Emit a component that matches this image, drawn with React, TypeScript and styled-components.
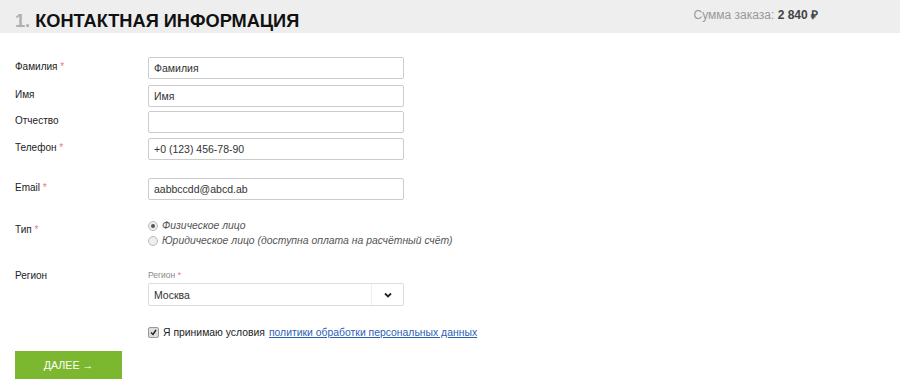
import styled, { createGlobalStyle } from "styled-components";

const GlobalStyle = createGlobalStyle`
  body {
    margin: 0;
    background: #fff;
    font-family: "Liberation Sans", Arial, sans-serif;
    color: #333;
  }
`;

const Header = styled.header`
  height: 33px;
  background: #eeeeee;
  display: flex;
  justify-content: space-between;
  align-items: flex-start;
  padding: 0 82px 0 15px;
`;
const Title = styled.h1`
  margin: 0;
  padding-top: 10px;
  font-size: 18.2px;
  line-height: 22px;
  font-weight: bold;
  color: #111;
  span {
    color: #b0b0b0;
  }
`;
const Total = styled.div`
  padding-top: 7px;
  font-size: 12px;
  line-height: 16px;
  color: #999;
  b {
    color: #444;
  }
`;

const Form = styled.form`
  padding: 24px 15px 0;
`;
const Row = styled.div<{ $gap: number }>`
  display: grid;
  grid-template-columns: 133px 256px;
  margin-bottom: ${(p) => p.$gap}px;
`;
const Label = styled.label`
  font-size: 10px;
  line-height: 12px;
  padding-top: 4px;
  color: #222;
  i {
    color: #e77;
    font-style: normal;
  }
`;
const Input = styled.input`
  box-sizing: border-box;
  width: 256px;
  height: 22px;
  border: 1px solid #ccc;
  border-radius: 2px;
  padding: 0 5px;
  font-family: inherit;
  font-size: 10.5px;
  color: #333;
  outline: none;
`;
const Radios = styled.div`
  display: flex;
  flex-direction: column;
  gap: 4px;
  grid-column: 2 / 4;
`;
const RadioLine = styled.label`
  display: flex;
  align-items: center;
  gap: 4px;
  font-size: 10.4px;
  font-style: italic;
  color: #555;
  white-space: nowrap;
`;
const Dot = styled.span<{ $on?: boolean }>`
  width: 8px;
  height: 8px;
  border-radius: 50%;
  border: 1px solid #bbb;
  background: #eee;
  display: inline-flex;
  align-items: center;
  justify-content: center;
  &::after {
    content: "";
    width: 4px;
    height: 4px;
    border-radius: 50%;
    background: ${(p) => (p.$on ? "#555" : "transparent")};
  }
`;
const Field = styled.div`
  display: flex;
  flex-direction: column;
  gap: 3px;
`;
const Small = styled.span`
  font-size: 8.5px;
  line-height: 10px;
  color: #888;
  padding-top: 4px;
  i {
    color: #e77;
    font-style: normal;
  }
`;
const Select = styled.div`
  box-sizing: border-box;
  width: 256px;
  height: 23px;
  border: 1px solid #ddd;
  border-radius: 2px;
  display: flex;
  align-items: center;
  font-size: 10.5px;
  color: #333;
  span {
    flex: 1;
    padding-left: 5px;
  }
`;
const Caret = styled.div`
  width: 31px;
  height: 100%;
  border-left: 1px solid #eee;
  display: flex;
  align-items: center;
  justify-content: center;
`;
const Agree = styled.div`
  margin-left: 133px;
  display: flex;
  align-items: center;
  gap: 4px;
  font-size: 10.4px;
  color: #222;
  white-space: nowrap;
  margin-bottom: 13px;
  a {
    color: #2b5fb4;
    text-decoration: underline;
  }
`;
const Check = styled.span`
  width: 9px;
  height: 9px;
  border: 1px solid #999;
  border-radius: 2px;
  background: #ddd;
  display: inline-flex;
  align-items: center;
  justify-content: center;
`;
const Button = styled.button`
  width: 107px;
  height: 28px;
  border: none;
  background: #7cb82f;
  color: #fff;
  font-family: inherit;
  font-size: 10.7px;
  cursor: pointer;
`;

export default function App() {
  return (
    <>
      <GlobalStyle />
      <Header>
        <Title>
          <span>1.</span> КОНТАКТНАЯ ИНФОРМАЦИЯ
        </Title>
        <Total>
          Сумма заказа: <b>2 840 ₽</b>
        </Total>
      </Header>
      <Form>
        <Row $gap={6}>
          <Label>
            Фамилия <i>*</i>
          </Label>
          <Input defaultValue="Фамилия" />
        </Row>
        <Row $gap={4}>
          <Label>Имя</Label>
          <Input defaultValue="Имя" />
        </Row>
        <Row $gap={5}>
          <Label>Отчество</Label>
          <Input defaultValue="" />
        </Row>
        <Row $gap={18}>
          <Label>
            Телефон <i>*</i>
          </Label>
          <Input defaultValue="+0 (123) 456-78-90" />
        </Row>
        <Row $gap={20}>
          <Label>
            Email <i>*</i>
          </Label>
          <Input defaultValue="aabbccdd@abcd.ab" />
        </Row>
        <Row $gap={20}>
          <Label>
            Тип <i>*</i>
          </Label>
          <Radios>
            <RadioLine>
              <Dot $on /> Физическое лицо
            </RadioLine>
            <RadioLine>
              <Dot /> Юридическое лицо (доступна оплата на расчётный счёт)
            </RadioLine>
          </Radios>
        </Row>
        <Row $gap={21}>
          <Label>Регион</Label>
          <Field>
            <Small>
              Регион <i>*</i>
            </Small>
            <Select>
              <span>Москва</span>
              <Caret>
                <svg width="8" height="6" viewBox="0 0 8 6">
                  <path d="M1 1.5 L4 4.5 L7 1.5" stroke="#222" strokeWidth="1.8" fill="none" />
                </svg>
              </Caret>
            </Select>
          </Field>
        </Row>
        <Agree>
          <Check>
            <svg width="7" height="7" viewBox="0 0 7 7">
              <path d="M1 3.5 L3 5.5 L6 1" stroke="#222" strokeWidth="1.4" fill="none" />
            </svg>
          </Check>
          Я принимаю условия <a href="#">политики обработки персональных данных</a>
        </Agree>
        <Button type="button">ДАЛЕЕ →</Button>
      </Form>
    </>
  );
}
